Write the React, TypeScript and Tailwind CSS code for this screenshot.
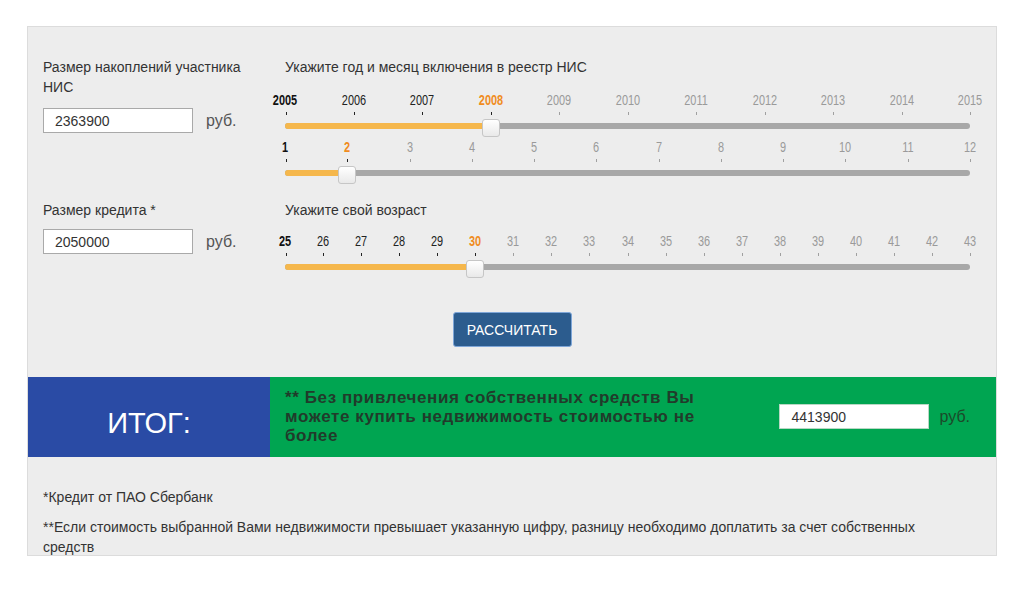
import React from "react";
import clsx from "clsx";

const years = Array.from({ length: 11 }, (_, i) => 2005 + i);
const months = Array.from({ length: 12 }, (_, i) => 1 + i);
const ages = Array.from({ length: 19 }, (_, i) => 25 + i);

interface ScaleProps {
  values: number[];
  selected: number;
}

// slider with labelled ticks, orange fill up to the picked value
const Scale: React.FC<ScaleProps> = ({ values, selected }) => {
  const last = values.length - 1;
  const idx = values.indexOf(selected);
  const pos = (i: number) => `${(i / last) * 100}%`;

  return (
    <div className="w-[685px]">
      <div className="relative h-[14px]">
        {values.map((v, i) => (
          <span
            key={v}
            className={clsx(
              "absolute top-0 -translate-x-1/2 scale-x-[0.78] text-[14px] leading-[14px]",
              i === 0 && "font-bold text-[#111]",
              i > 0 && i < idx && "text-[#222]",
              i === idx && i > 0 && "font-bold text-[#f08c1e]",
              i > idx && "text-[#9a9a9a]"
            )}
            style={{ left: pos(i) }}
          >
            {v}
          </span>
        ))}
      </div>
      <div className="relative mt-[5px] h-[3px]">
        {values.map((v, i) => (
          <span
            key={v}
            className={clsx(
              "absolute top-0 h-[3px] w-px",
              i <= idx ? "bg-[#222]" : "bg-[#a0a0a0]"
            )}
            style={{ left: `calc(${pos(i)} + ${i === 0 ? 1 : 0}px)` }}
          />
        ))}
      </div>
      <div className="relative mt-[8px] h-[6px] rounded-full bg-[#a8a8a8]">
        <div
          className="h-full rounded-full bg-[#f5b74c]"
          style={{ width: pos(idx) }}
        />
        <div
          className="absolute top-[-4px] h-[18px] w-[18px] -translate-x-1/2 rounded-[3px] border border-[#c6c6c6] bg-linear-to-b from-white to-[#e9e9e9]"
          style={{ left: pos(idx) }}
        />
      </div>
    </div>
  );
};

const MoneyInput: React.FC<{ value: string }> = ({ value }) => (
  <div className="flex items-center gap-[13px]">
    <input
      defaultValue={value}
      className="h-[25px] w-[150px] border border-[#a9a9a9] bg-white px-[11px] text-[14px] text-[#333] outline-none"
    />
    <span className="text-[16px] text-[#555]">руб.</span>
  </div>
);

export default function App() {
  return (
    <div className="min-h-[590px] bg-white pl-[27px] pt-[26px] font-['Liberation_Sans',Arial,sans-serif] text-[14px] leading-[20px] text-[#333]">
      <div className="h-[530px] w-[970px] overflow-hidden border border-[#dcdcdc] bg-[#ededed]">
        {/* savings + year/month */}
        <div className="mt-[30px] flex pl-[15px]">
          <div className="w-[242px]">
            <div className="w-[215px]">Размер накоплений участника НИС</div>
            <div className="mt-[11px]">
              <MoneyInput value="2363900" />
            </div>
          </div>
          <div>
            <div>Укажите год и месяц включения в реестр НИС</div>
            <div className="mt-[16px]">
              <Scale values={years} selected={2008} />
            </div>
            <div className="mt-[11px]">
              <Scale values={months} selected={2} />
            </div>
          </div>
        </div>

        {/* credit + age */}
        <div className="mt-[24px] flex pl-[15px]">
          <div className="w-[242px]">
            <div>Размер кредита *</div>
            <div className="mt-[9px]">
              <MoneyInput value="2050000" />
            </div>
          </div>
          <div>
            <div>Укажите свой возраст</div>
            <div className="mt-[14px]">
              <Scale values={ages} selected={30} />
            </div>
          </div>
        </div>

        <div className="mt-[42px] flex justify-center">
          <button className="h-[35px] w-[119px] rounded-[3px] border border-[#7ea6d8] bg-[#2c5c8e] text-[14px] text-white">
            РАССЧИТАТЬ
          </button>
        </div>

        {/* result band */}
        <div className="mt-[30px] flex h-[80px]">
          <div className="flex w-[242px] items-center justify-center bg-[#2a4ba5] pt-[12px] text-[29px] leading-none text-white">
            ИТОГ:
          </div>
          <div className="flex flex-1 items-start bg-[#00a551] pl-[15px] pr-[26px]">
            <div className="mt-[11px] w-[440px] text-[17px] font-bold leading-[19px] tracking-[0.6px] text-[#213b2b]">
              ** Без привлечения собственных средств Вы можете купить недвижимость стоимостью не более
            </div>
            <div className="ml-auto mt-[27px] flex items-center gap-[10px]">
              <input
                defaultValue="4413900"
                className="h-[25px] w-[150px] border border-[#b8d8c4] bg-white px-[11px] text-[14px] text-[#333] outline-none"
              />
              <span className="text-[16px] text-[#1b4a2a]">руб.</span>
            </div>
          </div>
        </div>

        <div className="mt-[30px] pl-[15px]">
          <p>*Кредит от ПАО Сбербанк</p>
          <p className="mt-[10px] w-[900px]">
            **Если стоимость выбранной Вами недвижимости превышает указанную цифру, разницу необходимо доплатить за счет собственных средств
          </p>
        </div>
      </div>
    </div>
  );
}
